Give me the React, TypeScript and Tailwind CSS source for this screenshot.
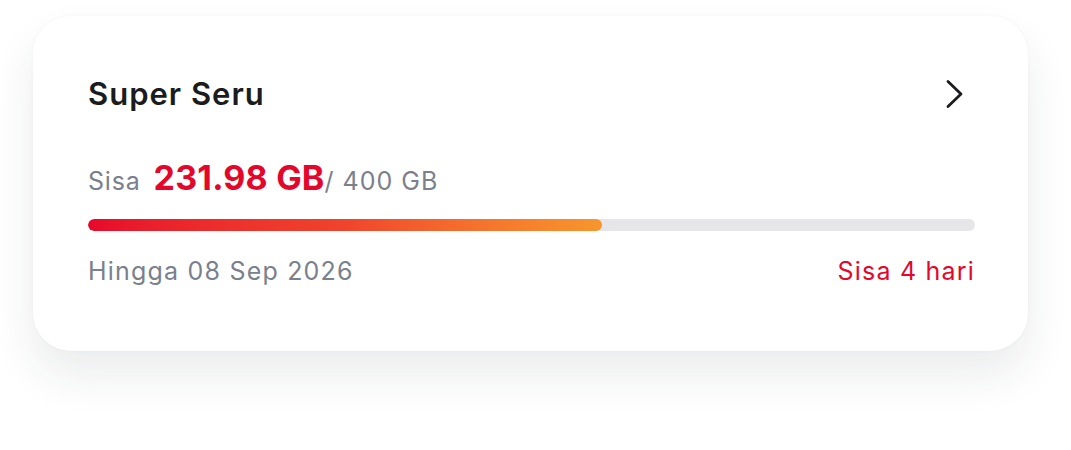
export default function App() {
  const used = 58; // percent of the bar filled

  return (
    <div className="min-h-screen bg-white pl-[33px] pt-[16px]" style={{ fontFamily: "Inter, 'Noto Sans', sans-serif" }}>
      <div className="w-[995px] rounded-[38px] bg-white pl-[55px] pr-[53px] pt-[58px] pb-[64px] shadow-[0_24px_44px_rgba(30,41,59,0.09),0_0_4px_rgba(30,41,59,0.03)]">
        {/* Header */}
        <div className="flex h-[40px] items-center justify-between">
          <h1 className="text-[31px] leading-[40px] font-semibold tracking-[1px] text-[#1b1c20]">Super Seru</h1>
          <svg width="20" height="30" viewBox="0 0 20 30" fill="none" className="mr-[10px]">
            <polyline points="3,2.5 16,15 3,27.5" stroke="#1b1c20" strokeWidth="2.8" strokeLinecap="round" strokeLinejoin="round" />
          </svg>
        </div>

        {/* Quota */}
        <div className="mt-[44px] flex h-[40px] items-baseline leading-[40px]">
          <span className="text-[25px] tracking-[0.8px] text-[#7a808c]">Sisa</span>
          <span className="ml-[13px] text-[34px] font-bold tracking-[0.2px] text-[#e5062c]">231.98 GB</span>
          <span className="text-[25px] tracking-[1px] text-[#7a808c]">/ 400 GB</span>
        </div>

        {/* Progress */}
        <div className="mt-[21px] h-[12px] w-full overflow-hidden rounded-full bg-[#e6e6e8]">
          <div
            className="h-full rounded-full bg-gradient-to-r from-[#e8062b] via-[#f0432c] to-[#f7962c]"
            style={{ width: `${used}%` }}
          />
        </div>

        {/* Footer */}
        <div className="mt-[24px] flex h-[32px] items-center justify-between text-[25px] leading-[32px] tracking-[1.2px]">
          <span className="text-[#7a808c]">Hingga 08 Sep 2026</span>
          <span className="text-[#e5062c]">Sisa 4 hari</span>
        </div>
      </div>
    </div>
  );
}
